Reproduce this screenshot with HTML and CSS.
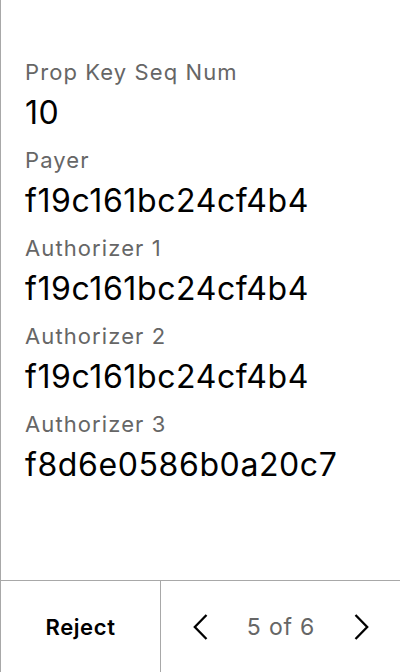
FILE: index.html
```html
<!DOCTYPE html>
<html>
<head>
<meta charset="utf-8">
<link rel="stylesheet" href="styles.css">
</head>
<body>
<div class="screen">
  <div class="content">
    <div class="field">
      <div class="label">Prop Key Seq Num</div>
      <div class="value">10</div>
    </div>
    <div class="field">
      <div class="label">Payer</div>
      <div class="value">f19c161bc24cf4b4</div>
    </div>
    <div class="field">
      <div class="label">Authorizer 1</div>
      <div class="value">f19c161bc24cf4b4</div>
    </div>
    <div class="field">
      <div class="label">Authorizer 2</div>
      <div class="value">f19c161bc24cf4b4</div>
    </div>
    <div class="field">
      <div class="label">Authorizer 3</div>
      <div class="value">f8d6e0586b0a20c7</div>
    </div>
  </div>
  <div class="footer">
    <div class="reject">Reject</div>
    <div class="pager">
      <svg class="arrow" width="15" height="26" viewBox="0 0 15 26"><path d="M13.5 1 L1.8 13 L13.5 25" fill="none" stroke="#000" stroke-width="2.3"/></svg>
      <span class="count">5 of 6</span>
      <svg class="arrow" width="15" height="26" viewBox="0 0 15 26"><path d="M1.5 1 L13.2 13 L1.5 25" fill="none" stroke="#000" stroke-width="2.3"/></svg>
    </div>
  </div>
</div>
</body>
</html>
```
FILE: styles.css
```css
html, body {
  margin: 0;
  padding: 0;
  background: #fff;
}
body {
  font-family: Inter, "Noto Sans", sans-serif;
  color: #000;
}
.screen {
  width: 400px;
  height: 672px;
  box-sizing: border-box;
  border-left: 1px solid #a8a8a8;
  display: flex;
  flex-direction: column;
}
.content {
  flex: 1;
  padding: 58px 0 0 24px;
}
.field {
  margin-bottom: 13px;
}
.label {
  font-size: 22px;
  line-height: 28px;
  letter-spacing: 1.1px;
  color: #666;
  margin-bottom: 7px;
}
.value {
  font-size: 32px;
  line-height: 40px;
  letter-spacing: 0.6px;
  color: #000;
}
.footer {
  height: 92px;
  border-top: 1px solid #a8a8a8;
  display: flex;
  box-sizing: border-box;
}
.reject {
  width: 159px;
  border-right: 1px solid #a8a8a8;
  display: flex;
  align-items: center;
  justify-content: center;
  font-size: 22px;
  font-weight: 600;
  letter-spacing: 0.6px;
}
.pager {
  flex: 1;
  display: flex;
  align-items: center;
  justify-content: space-between;
  padding: 0 31px 0 32px;
}
.count {
  font-size: 23px;
  letter-spacing: 0.8px;
  color: #666;
}
```
